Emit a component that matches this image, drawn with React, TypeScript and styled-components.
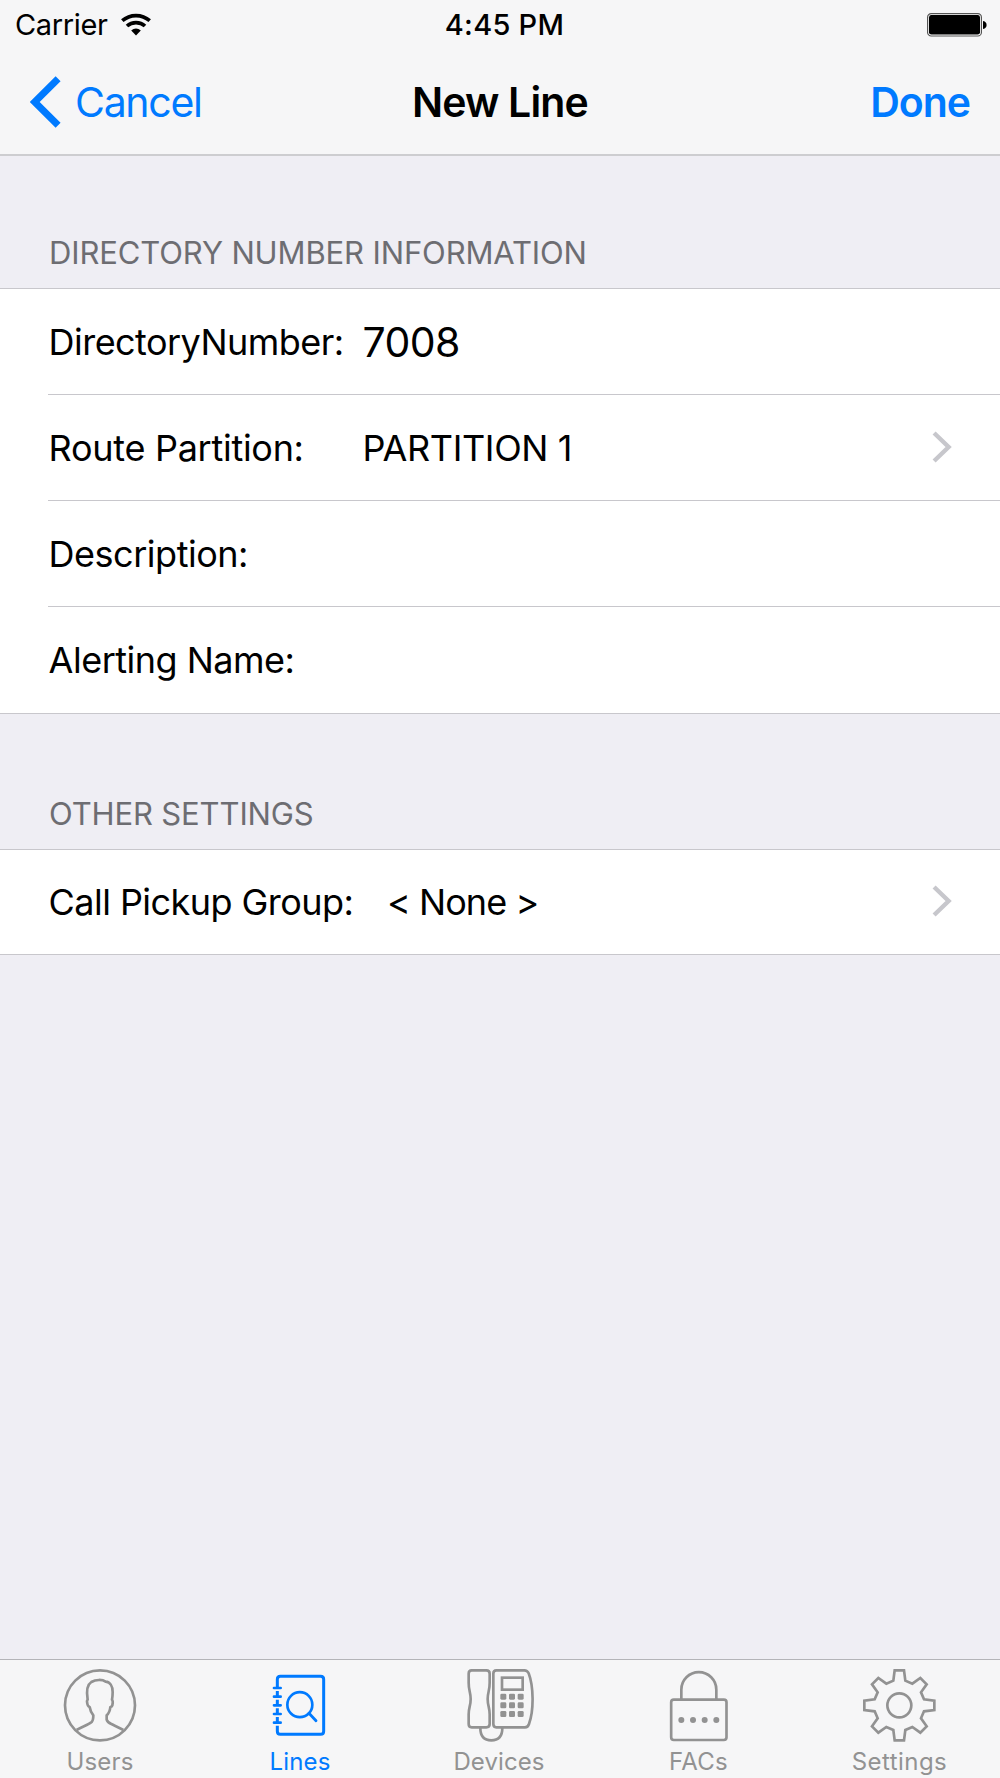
import React from 'react';
import styled, { createGlobalStyle } from 'styled-components';

const BLUE = '#007aff';
const GRAY = '#929292';
const LINE = '#c8c7cc';

const GlobalStyle = createGlobalStyle`
  * { box-sizing: border-box; }
  body { margin: 0; background: #efeef4; }
`;

const Screen = styled.div`
  width: 1000px;
  height: 1778px;
  display: flex;
  flex-direction: column;
  overflow: hidden;
  background: #efeef4;
  color: #000;
  font-family: Inter, 'Liberation Sans', sans-serif;
  white-space: nowrap;
`;

const Header = styled.header`
  height: 156px;
  flex: none;
  background: #f6f6f7;
  border-bottom: 2px solid #cdcdd0;
`;

const StatusBar = styled.div`
  display: grid;
  grid-template-columns: 1fr auto 1fr;
  align-items: center;
  height: 48px;
  padding: 2px 13px 0 15px;
  font-size: 29px;
  line-height: 46px;
`;

const Carrier = styled.div`
  display: flex;
  align-items: center;
  gap: 12px;
  letter-spacing: -0.35px;
`;

const Clock = styled.div`
  margin-left: 7px;
  font-weight: 500;
  letter-spacing: 0.25px;
`;

const BatterySlot = styled.div`
  display: flex;
  justify-content: flex-end;
`;

const NavBar = styled.nav`
  display: grid;
  grid-template-columns: 1fr auto 1fr;
  align-items: center;
  height: 106px;
  padding: 1px 30px 0;
  font-size: 41px;
`;

const BackButton = styled.button`
  display: flex;
  align-items: center;
  gap: 14px;
  border: 0;
  padding: 0;
  background: none;
  color: ${BLUE};
  font: inherit;
  letter-spacing: -1.3px;
`;

const Title = styled.h1`
  margin: 0;
  font-size: 41px;
  font-weight: 600;
  letter-spacing: -0.83px;
`;

const DoneButton = styled.button`
  justify-self: end;
  border: 0;
  padding: 0;
  background: none;
  color: ${BLUE};
  font: inherit;
  font-weight: 600;
  letter-spacing: -1.02px;
`;

const Content = styled.main`
  flex: 1;
`;

const SectionTitle = styled.h2<{ $height: number }>`
  display: flex;
  align-items: flex-end;
  height: ${(p) => p.$height}px;
  margin: 0;
  padding: 0 48px 15px 49px;
  color: #6d6d72;
  font-size: 31px;
  font-weight: 400;
  line-height: 40px;
  letter-spacing: -0.13px;
`;

const Group = styled.section`
  padding-left: 48px;
  background: #fff;
  border-top: 1px solid ${LINE};
  border-bottom: 1px solid ${LINE};
`;

const Row = styled.div<{ $height?: number }>`
  display: flex;
  align-items: center;
  height: ${(p) => p.$height ?? 106}px;
  padding-right: 48px;
  font-size: 36px;

  & + & {
    border-top: 1px solid ${LINE};
  }
`;

const Label = styled.span<{ $width: number; $spacing: number }>`
  width: ${(p) => p.$width}px;
  padding-left: 0.6px;
  letter-spacing: ${(p) => p.$spacing}px;
`;

const Value = styled.span<{ $large?: boolean; $spacing: number }>`
  flex: 1;
  font-size: ${(p) => (p.$large ? 41 : 36)}px;
  letter-spacing: ${(p) => p.$spacing}px;
`;

const TabBar = styled.footer`
  display: grid;
  grid-template-columns: repeat(5, 200px);
  flex: none;
  height: 119px;
  background: #f6f6f7;
  border-top: 1px solid #b4b4b8;
`;

const Tab = styled.div<{ $active?: boolean }>`
  display: flex;
  flex-direction: column;
  align-items: center;
  color: ${(p) => (p.$active ? BLUE : GRAY)};
`;

const TabLabel = styled.span<{ $spacing: number; $nudge?: number }>`
  padding-right: ${(p) => p.$nudge ?? 0}px;
  font-size: 24px;
  line-height: 23px;
  letter-spacing: ${(p) => p.$spacing}px;
`;

const TabSvg = styled.svg`
  display: block;
  width: 120px;
  height: 90px;
  fill: none;
  stroke: currentColor;
  stroke-width: 8;
  stroke-linejoin: round;
`;

const WifiIcon = () => (
  <svg width="32" height="24" viewBox="0 0 32 24" fill="none" stroke="#000" strokeWidth="3.7">
    <path d="M2.3 7.7C10 .8 22 .8 29.7 7.7" />
    <path d="M7 13C12 8.4 20 8.4 25 13" />
    <path d="M11.2 17.6C14 14.8 18 14.8 20.8 17.6L16 22.4Z" fill="#000" stroke="none" />
  </svg>
);

const BatteryIcon = () => (
  <svg width="60" height="24" viewBox="0 0 60 24">
    <rect x=".6" y=".6" width="53.8" height="22.4" rx="3.6" fill="#fff" stroke="#555" strokeWidth="1.2" />
    <rect x="2" y="2" width="51" height="19.6" rx="2.4" />
    <path d="M56 8C58.6 8.4 59.6 10 59.6 12S58.6 15.600 56 16Z" />
  </svg>
);

const BackIcon = () => (
  <svg width="31" height="52" viewBox="0 0 31 52" fill="none" stroke={BLUE} strokeWidth="7">
    <path d="M28.100 2.700L4.700 26L28.100 49.300" />
  </svg>
);

const ChevronSvg = styled.svg`
  width: 20px;
  height: 32px;
  margin-bottom: 2px;
  fill: none;
  stroke: #c7c7cc;
  stroke-width: 4.4;
`;

const Chevron = () => (
  <ChevronSvg viewBox="0 0 20 32">
    <path d="M2.100 2L16.600 16L2.100 30" />
  </ChevronSvg>
);

const UsersIcon = () => (
  <TabSvg viewBox="0 30 360 270">
    <circle cx="180" cy="166" r="105" />
    <path d="M110 240C126 230 144 225 155 216Q160 211 160 196C155 190 151 184 149 171Q142 169 141 154Q141 151 143 149C139 125 140 105 154 96C168 88 187 88 197 95C210 96 218 109 218 126Q218 138 216 149Q220 153 217 166Q216 170 211 171C210 182 207 190 200 196V209Q202 217 214 222C226 228 238 233 250 240" />
  </TabSvg>
);

const LinesIcon = () => (
  <TabSvg viewBox="0 30 360 270">
    <path
      strokeWidth="9"
      d="M112 114V88Q112 79 121 79H242Q251 79 251 88V244Q251 253 242 253H121Q112 253 112 244V227M112 123V140M112 149V166M112 175V192M112 201V218"
    />
    <path strokeLinecap="round" d="M102 114H122M102 140H122M102 166H122M102 192H122M102 218H122" />
    <circle cx="179.500" cy="164" r="37.500" />
    <path strokeLinecap="round" strokeWidth="8.500" d="M207 190L228 212" />
  </TabSvg>
);

const DevicesIcon = () => (
  <TabSvg viewBox="0 30 360 270">
    <path d="M95 61H139Q149 61 149 71V98C149 124 143 126 143 147S149 172 149 193V222Q149 232 139 232H95Q86 232 86 222V193C86 172 92 168 92 147S86 124 86 98V71Q86 61 95 61Z" />
    <path d="M169 61H253Q262 61 266 70C281 110 282 181 267 222Q264 232 255 232H169Q160 232 160 222V71Q160 61 169 61Z" />
    <path d="M121 234C121 258 132 271 154 271S187 258 187 234" />
    <rect x="186" y="83" width="62" height="36" strokeLinejoin="miter" />
    <g fill="currentColor" stroke="none">
      {[131, 157, 183].map((y) =>
        [181, 207, 233].map((x) => <rect key={`${x}-${y}`} x={x} y={y} width="18" height="18" rx="4" />)
      )}
    </g>
  </TabSvg>
);

const LockIcon = () => (
  <TabSvg viewBox="0 30 360 270">
    <rect x="93.500" y="149" width="166" height="121" rx="8" />
    <path d="M124 148V119A52.500 52.500 0 0 1 229 119V148" />
    <g fill="currentColor" stroke="none">
      {[124, 159, 194, 229].map((x) => (
        <circle key={x} cx={x} cy="210" r="9" />
      ))}
    </g>
  </TabSvg>
);

const GEAR_TOOTH: [number, number][] = [
  [-14, -105],
  [14, -105],
  [18, -74],
  [39, -65],
  [63, -82],
  [82, -63],
  [65, -39],
  [74, -18],
];

const gearPoints = [0, 1, 2, 3]
  .flatMap((turn) =>
    GEAR_TOOTH.map(([x, y]) => {
      let px = x;
      let py = y;
      for (let i = 0; i < turn; i++) [px, py] = [-py, px];
      return `${178 + px},${166 + py}`;
    })
  )
  .join(' ');

const SettingsIcon = () => (
  <TabSvg viewBox="0 30 360 270">
    <polygon points={gearPoints} strokeLinejoin="miter" />
    <circle cx="178" cy="166" r="36" />
  </TabSvg>
);

const tabs = [
  { name: 'Users', Icon: UsersIcon, spacing: 0.16 },
  { name: 'Lines', Icon: LinesIcon, spacing: 0.16, active: true },
  { name: 'Devices', Icon: DevicesIcon, spacing: 0.09, nudge: 2 },
  { name: 'FACs', Icon: LockIcon, spacing: 0.25, nudge: 3 },
  { name: 'Settings', Icon: SettingsIcon, spacing: 0.45, nudge: 1 },
];

export default function App() {
  return (
    <Screen>
      <GlobalStyle />
      <Header>
        <StatusBar>
          <Carrier>
            Carrier
            <WifiIcon />
          </Carrier>
          <Clock>4:45 PM</Clock>
          <BatterySlot>
            <BatteryIcon />
          </BatterySlot>
        </StatusBar>
        <NavBar>
          <BackButton>
            <BackIcon />
            Cancel
          </BackButton>
          <Title>New Line</Title>
          <DoneButton>Done</DoneButton>
        </NavBar>
      </Header>

      <Content>
        <SectionTitle $height={132}>DIRECTORY NUMBER INFORMATION</SectionTitle>
        <Group>
          <Row $height={105}>
            <Label $width={314.5} $spacing={-0.54}>DirectoryNumber:</Label>
            <Value $large $spacing={-0.6}>7008</Value>
          </Row>
          <Row>
            <Label $width={314.5} $spacing={-0.28}>Route Partition:</Label>
            <Value $spacing={-0.36}>PARTITION 1</Value>
            <Chevron />
          </Row>
          <Row>
            <Label $width={314} $spacing={-0.48}>Description:</Label>
          </Row>
          <Row $height={107}>
            <Label $width={314} $spacing={-0.5}>Alerting Name:</Label>
          </Row>
        </Group>
        <SectionTitle $height={135}>OTHER SETTINGS</SectionTitle>
        <Group>
          <Row $height={104}>
            <Label $width={339} $spacing={-0.55}>Call Pickup Group:</Label>
            <Value $spacing={-0.95}>&lt; None &gt;</Value>
            <Chevron />
          </Row>
        </Group>
      </Content>

      <TabBar>
        {tabs.map(({ name, Icon, spacing, nudge, active }) => (
          <Tab key={name} $active={active}>
            <Icon />
            <TabLabel $spacing={spacing} $nudge={nudge}>{name}</TabLabel>
          </Tab>
        ))}
      </TabBar>
    </Screen>
  );
}
